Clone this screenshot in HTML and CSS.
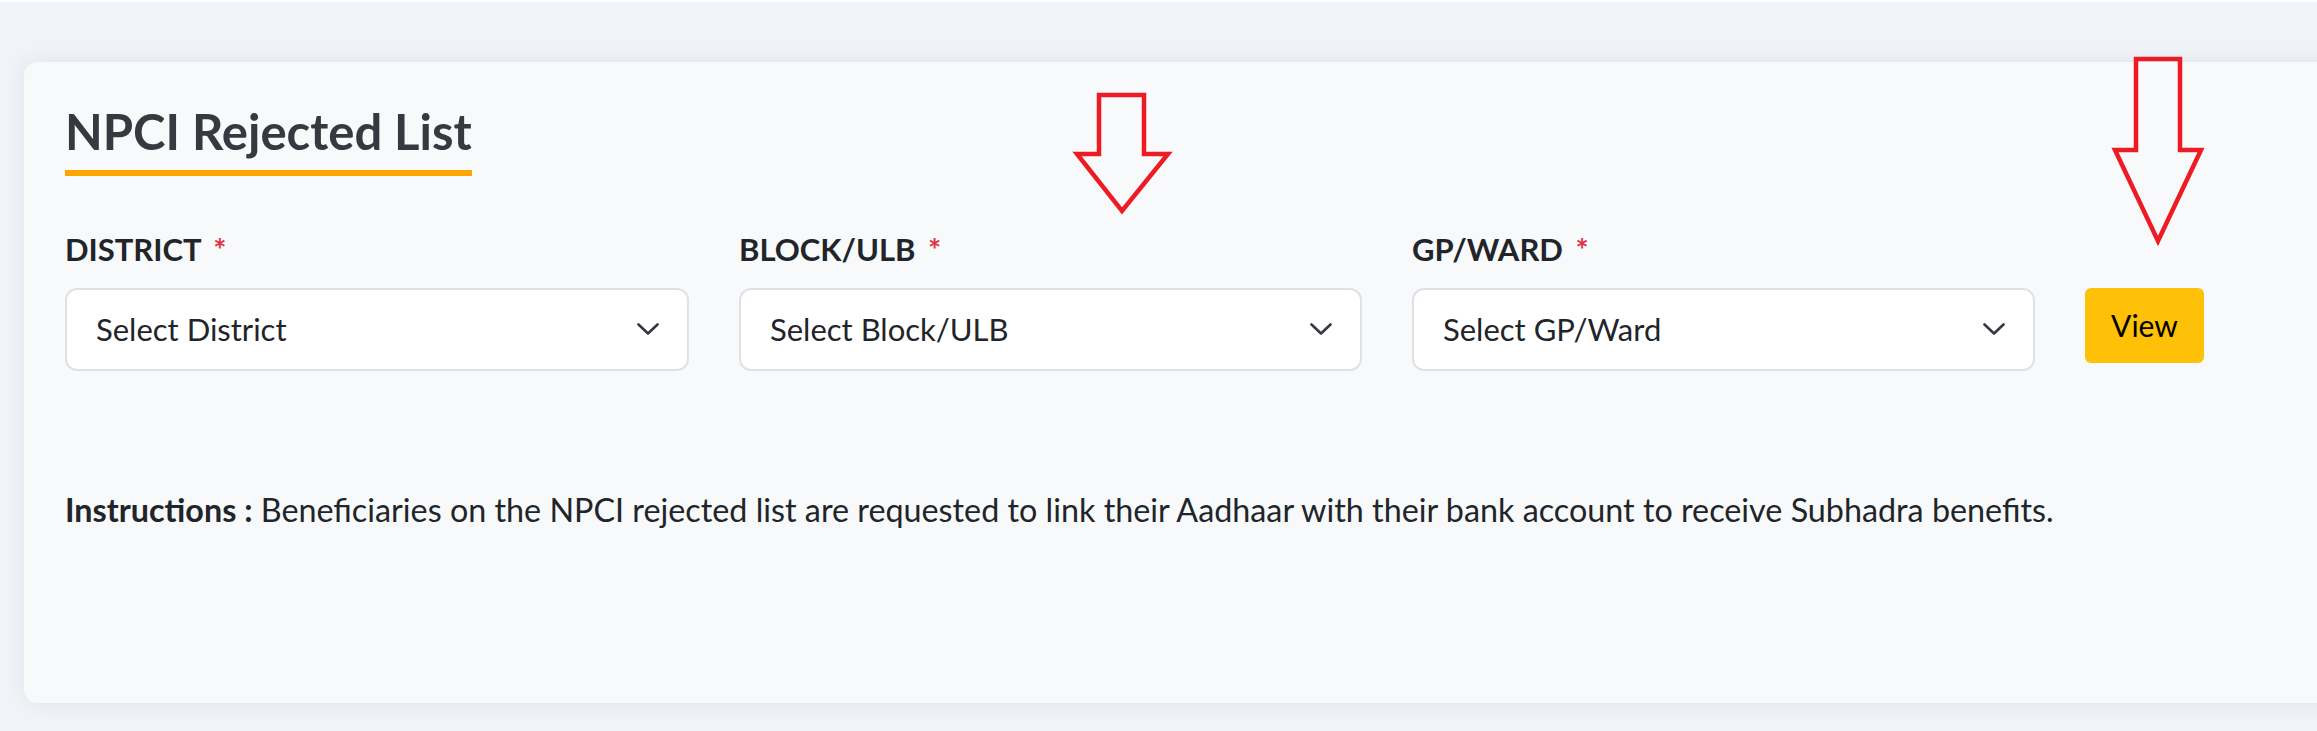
FILE: index.html
```html
<!DOCTYPE html>
<html lang="en">
<head>
<meta charset="utf-8">
<title>NPCI Rejected List</title>
<link rel="stylesheet" href="styles.css">
</head>
<body>
<main class="page">
  <section class="card">
    <h2 class="card-title">NPCI Rejected List</h2>
    <form class="filters">
      <div class="field">
        <label class="field-label">DISTRICT <span class="req">*</span></label>
        <div class="select">
          <span class="select-text">Select District</span>
          <svg class="chevron" width="22" height="12" viewBox="0 0 22 12"><path d="M1.5 1.5 L11 10.5 L20.5 1.5" fill="none" stroke="#343a40" stroke-width="2.6" stroke-linecap="round" stroke-linejoin="round"/></svg>
        </div>
      </div>
      <div class="field">
        <label class="field-label">BLOCK/ULB <span class="req">*</span></label>
        <div class="select">
          <span class="select-text">Select Block/ULB</span>
          <svg class="chevron" width="22" height="12" viewBox="0 0 22 12"><path d="M1.5 1.5 L11 10.5 L20.5 1.5" fill="none" stroke="#343a40" stroke-width="2.6" stroke-linecap="round" stroke-linejoin="round"/></svg>
        </div>
      </div>
      <div class="field">
        <label class="field-label">GP/WARD <span class="req">*</span></label>
        <div class="select">
          <span class="select-text">Select GP/Ward</span>
          <svg class="chevron" width="22" height="12" viewBox="0 0 22 12"><path d="M1.5 1.5 L11 10.5 L20.5 1.5" fill="none" stroke="#343a40" stroke-width="2.6" stroke-linecap="round" stroke-linejoin="round"/></svg>
        </div>
      </div>
      <div class="field-action">
        <button type="button" class="btn-view">View</button>
      </div>
    </form>
    <p class="instructions"><strong>Instructions :</strong> Beneficiaries on the NPCI rejected list are requested to link their Aadhaar with their bank account to receive Subhadra benefits.</p>
  </section>
</main>
<svg class="annotations" width="2317" height="731" viewBox="0 0 2317 731">
  <polygon points="1099,95 1144,95 1144,154 1168,154 1122,211 1077,154 1099,154" fill="none" stroke="#ed1c24" stroke-width="4.5" stroke-linejoin="miter"/>
  <polygon points="2136,59 2180,59 2180,150 2201,150 2158,241 2115,150 2136,150" fill="none" stroke="#ed1c24" stroke-width="4.5" stroke-linejoin="miter"/>
</svg>
</body>
</html>
```

FILE: styles.css
```css
* { box-sizing: border-box; }

html, body {
  margin: 0;
  padding: 0;
}

body {
  background: #f0f3f7;
  border-top: 2px solid #ffffff;
  font-family: "Lato", "Noto Sans", sans-serif;
  color: #212529;
  overflow: hidden;
  width: 2317px;
  height: 731px;
  position: relative;
}

.page {
  padding: 60px 0 0 24px;
}

.card {
  width: 2500px;
  height: 641px;
  background: #f8f9fb;
  border-radius: 14px;
  box-shadow: 0 0 22px rgba(30, 40, 60, 0.07);
  padding: 40px 0 0 41px;
}

.card-title {
  display: inline-block;
  margin: 0;
  font-size: 49px;
  line-height: 1.2;
  font-weight: 700;
  color: #343a40;
  padding-bottom: 9px;
  border-bottom: 6px solid #ffa500;
}

.filters {
  display: grid;
  grid-template-columns: 624px 623px 623px auto;
  column-gap: 50px;
  margin-top: 55px;
  width: 2200px;
}

.field {
  display: flex;
  flex-direction: column;
}

.field-label {
  font-size: 31px;
  line-height: 36px;
  font-weight: 700;
  color: #212529;
  margin-bottom: 21px;
}

.req {
  color: #dc3545;
  margin-left: 5px;
}

.select {
  height: 83px;
  background: #ffffff;
  border: 2px solid #dee2e6;
  border-radius: 12px;
  display: flex;
  align-items: center;
  justify-content: space-between;
  padding: 0 28px 0 29px;
}

.select-text {
  font-size: 31px;
  color: #212529;
}

.chevron {
  display: block;
}

.field-action {
  padding-top: 57px;
}

.btn-view {
  width: 119px;
  height: 75px;
  background: #ffc107;
  border: none;
  border-radius: 6px;
  font-family: inherit;
  font-size: 30px;
  color: #000000;
  padding: 0;
}

.instructions {
  margin: 116px 0 0 0;
  font-size: 32.3px;
  line-height: 45px;
  color: #212529;
}

.instructions strong {
  font-weight: 700;
}

.annotations {
  position: absolute;
  top: -2px;
  left: 0;
  pointer-events: none;
}
```
